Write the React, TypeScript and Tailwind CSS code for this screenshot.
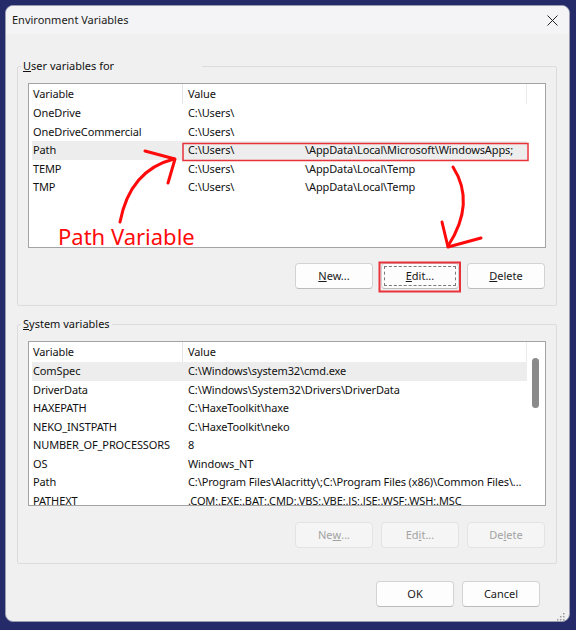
import React from "react";

type Row = { name: string; value: string; rest?: string };

const userVars: Row[] = [
  { name: "OneDrive", value: "C:\\Users\\" },
  { name: "OneDriveCommercial", value: "C:\\Users\\" },
  { name: "Path", value: "C:\\Users\\", rest: "\\AppData\\Local\\Microsoft\\WindowsApps;" },
  { name: "TEMP", value: "C:\\Users\\", rest: "\\AppData\\Local\\Temp" },
  { name: "TMP", value: "C:\\Users\\", rest: "\\AppData\\Local\\Temp" },
];

const systemVars: Row[] = [
  { name: "ComSpec", value: "C:\\Windows\\system32\\cmd.exe" },
  { name: "DriverData", value: "C:\\Windows\\System32\\Drivers\\DriverData" },
  { name: "HAXEPATH", value: "C:\\HaxeToolkit\\haxe" },
  { name: "NEKO_INSTPATH", value: "C:\\HaxeToolkit\\neko" },
  { name: "NUMBER_OF_PROCESSORS", value: "8" },
  { name: "OS", value: "Windows_NT" },
  { name: "Path", value: "C:\\Program Files\\Alacritty\\;C:\\Program Files (x86)\\Common Files\\..." },
  { name: "PATHEXT", value: ".COM;.EXE;.BAT;.CMD;.VBS;.VBE;.JS;.JSE;.WSF;.WSH;.MSC" },
];

const VarList = ({ rows, selected, scroll }: { rows: Row[]; selected: number; scroll?: boolean }) => (
  <div className="flex h-[165px] min-w-0 overflow-hidden border border-[#a3a3a3] bg-white tracking-[-0.12px]">
    <div className="min-w-0 flex-1 overflow-hidden pl-[3px]">
      <div className="flex h-[20px] items-center border-r border-[#ececec]">
        <div className="w-[151px] h-full flex items-center border-r border-[#e5e5e5] pl-[1px]">Variable</div>
        <div className="pl-[5px]">Value</div>
      </div>
      {rows.map((r, i) => (
        <div
          key={i}
          className={`flex h-[18.5px] items-center whitespace-nowrap ${i === selected ? "bg-[#ededed]" : ""}`}
        >
          <div className="w-[151px] shrink-0 pl-[1px]">{r.name}</div>
          <div className="flex pl-[5px]">
            {r.rest ? (
              <>
                <span className="w-[117px]">{r.value}</span>
                <span>{r.rest}</span>
              </>
            ) : (
              <span>{r.value}</span>
            )}
          </div>
        </div>
      ))}
    </div>
    <div className="w-[18px] shrink-0">
      {scroll && <div className="ml-[5px] mt-[16px] h-[50px] w-[7px] rounded-full bg-[#8a8a8a]" />}
    </div>
  </div>
);

const Btn = ({ children, disabled, focus }: { children: React.ReactNode; disabled?: boolean; focus?: boolean }) => (
  <div
    className={`flex h-[26px] w-[78px] items-center justify-center rounded-[4px] border p-[2px] ${
      disabled
        ? "border-[#e3e3e3] bg-[#f5f5f5] text-[#a3a3a3]"
        : "border-[#d3d3d3] border-b-[#bcbcbc] bg-[#fdfdfd] text-[#1a1a1a]"
    }`}
  >
    <span
      className={`flex h-full w-full items-center justify-center ${
        focus ? "border border-dashed border-[#7a7a7a]" : ""
      }`}
    >
      {children}
    </span>
  </div>
);

export default function App() {
  return (
    <div
      className="relative h-[630px] w-[576px] bg-[#252b69] pb-[8px] pl-[5px] pr-[6px] pt-[5px] text-[11px] text-[#111]"
      style={{ fontFamily: '"Noto Sans", "Open Sans", sans-serif' }}
    >
      <div className="flex h-[617px] w-[565px] flex-col overflow-hidden rounded-[8px] border border-[#9a9db0] bg-[#f0f0f0]">
        <div className="flex h-[28px] items-center justify-between bg-[#f4f4f6] pl-[6px] pr-[11px]">
          <span className="text-[11px] text-[#1a1a1a]">Environment Variables</span>
          <svg width="11" height="11" viewBox="0 0 11 11">
            <path d="M0.5 0.5 L10.5 10.5 M10.5 0.5 L0.5 10.5" stroke="#222" strokeWidth="1" />
          </svg>
        </div>

        <div className="flex flex-col pl-[11px] pr-[12px] pt-[24px]">
          <fieldset className="min-w-0 rounded-[2px] border border-[#dcdcdc]">
            <legend className="ml-[3px] w-[181px] pl-[2px] leading-[16px]">
              <u>U</u>ser variables for
            </legend>
            <div className="px-[10px] pb-[16px] pt-[9px]">
              <VarList rows={userVars} selected={2} />
              <div className="mt-[15px] flex justify-end gap-[8px] pr-[1px]">
                <Btn>
                  <u>N</u>ew...
                </Btn>
                <Btn focus>
                  <u>E</u>dit...
                </Btn>
                <Btn>
                  <u>D</u>elete
                </Btn>
              </div>
            </div>
          </fieldset>

          <fieldset className="mt-[10px] min-w-0 rounded-[2px] border border-[#dcdcdc]">
            <legend className="ml-[3px] px-[2px] leading-[16px]">
              <u>S</u>ystem variables
            </legend>
            <div className="px-[10px] pb-[15px] pt-[9px]">
              <VarList rows={systemVars} selected={0} scroll />
              <div className="mt-[16px] flex justify-end gap-[8px] pr-[1px]">
                <Btn disabled>
                  Ne<u>w</u>...
                </Btn>
                <Btn disabled>
                  Ed<u>i</u>t...
                </Btn>
                <Btn disabled>
                  De<u>l</u>ete
                </Btn>
              </div>
            </div>
          </fieldset>

          <div className="mt-[17px] flex justify-end gap-[8px] pr-[17px]">
            <Btn>OK</Btn>
            <Btn>Cancel</Btn>
          </div>
        </div>
      </div>

      <svg className="pointer-events-none absolute left-0 top-0" width="576" height="630" viewBox="0 0 576 630">
        <rect x="183" y="143.5" width="345" height="17" fill="none" stroke="#e8323a" strokeWidth="1.5" />
        <rect x="379.5" y="262.5" width="80.5" height="29" fill="none" stroke="#e8323a" strokeWidth="2" />
        <g fill="none" stroke="#ff0a0a" strokeWidth="3" strokeLinecap="round" strokeLinejoin="round">
          <path d="M120 222 Q130 170 174 159" />
          <path d="M145 151 L175 159 L168 183" />
          <path d="M453 167 Q476 203 448 246" />
          <path d="M442 222 L448 247 L481 238" />
        </g>
        <text x="58" y="245" fill="#ff0a0a" fontSize="22" fontFamily='"Noto Sans", sans-serif'>
          Path Variable
        </text>
        <g fill="#9a9a9a">
          <rect x="563" y="613" width="1.5" height="1.5" />
          <rect x="560" y="616" width="1.5" height="1.5" />
          <rect x="563" y="616" width="1.5" height="1.5" />
          <rect x="557" y="619" width="1.5" height="1.5" />
          <rect x="560" y="619" width="1.5" height="1.5" />
          <rect x="563" y="619" width="1.5" height="1.5" />
        </g>
      </svg>
    </div>
  );
}
